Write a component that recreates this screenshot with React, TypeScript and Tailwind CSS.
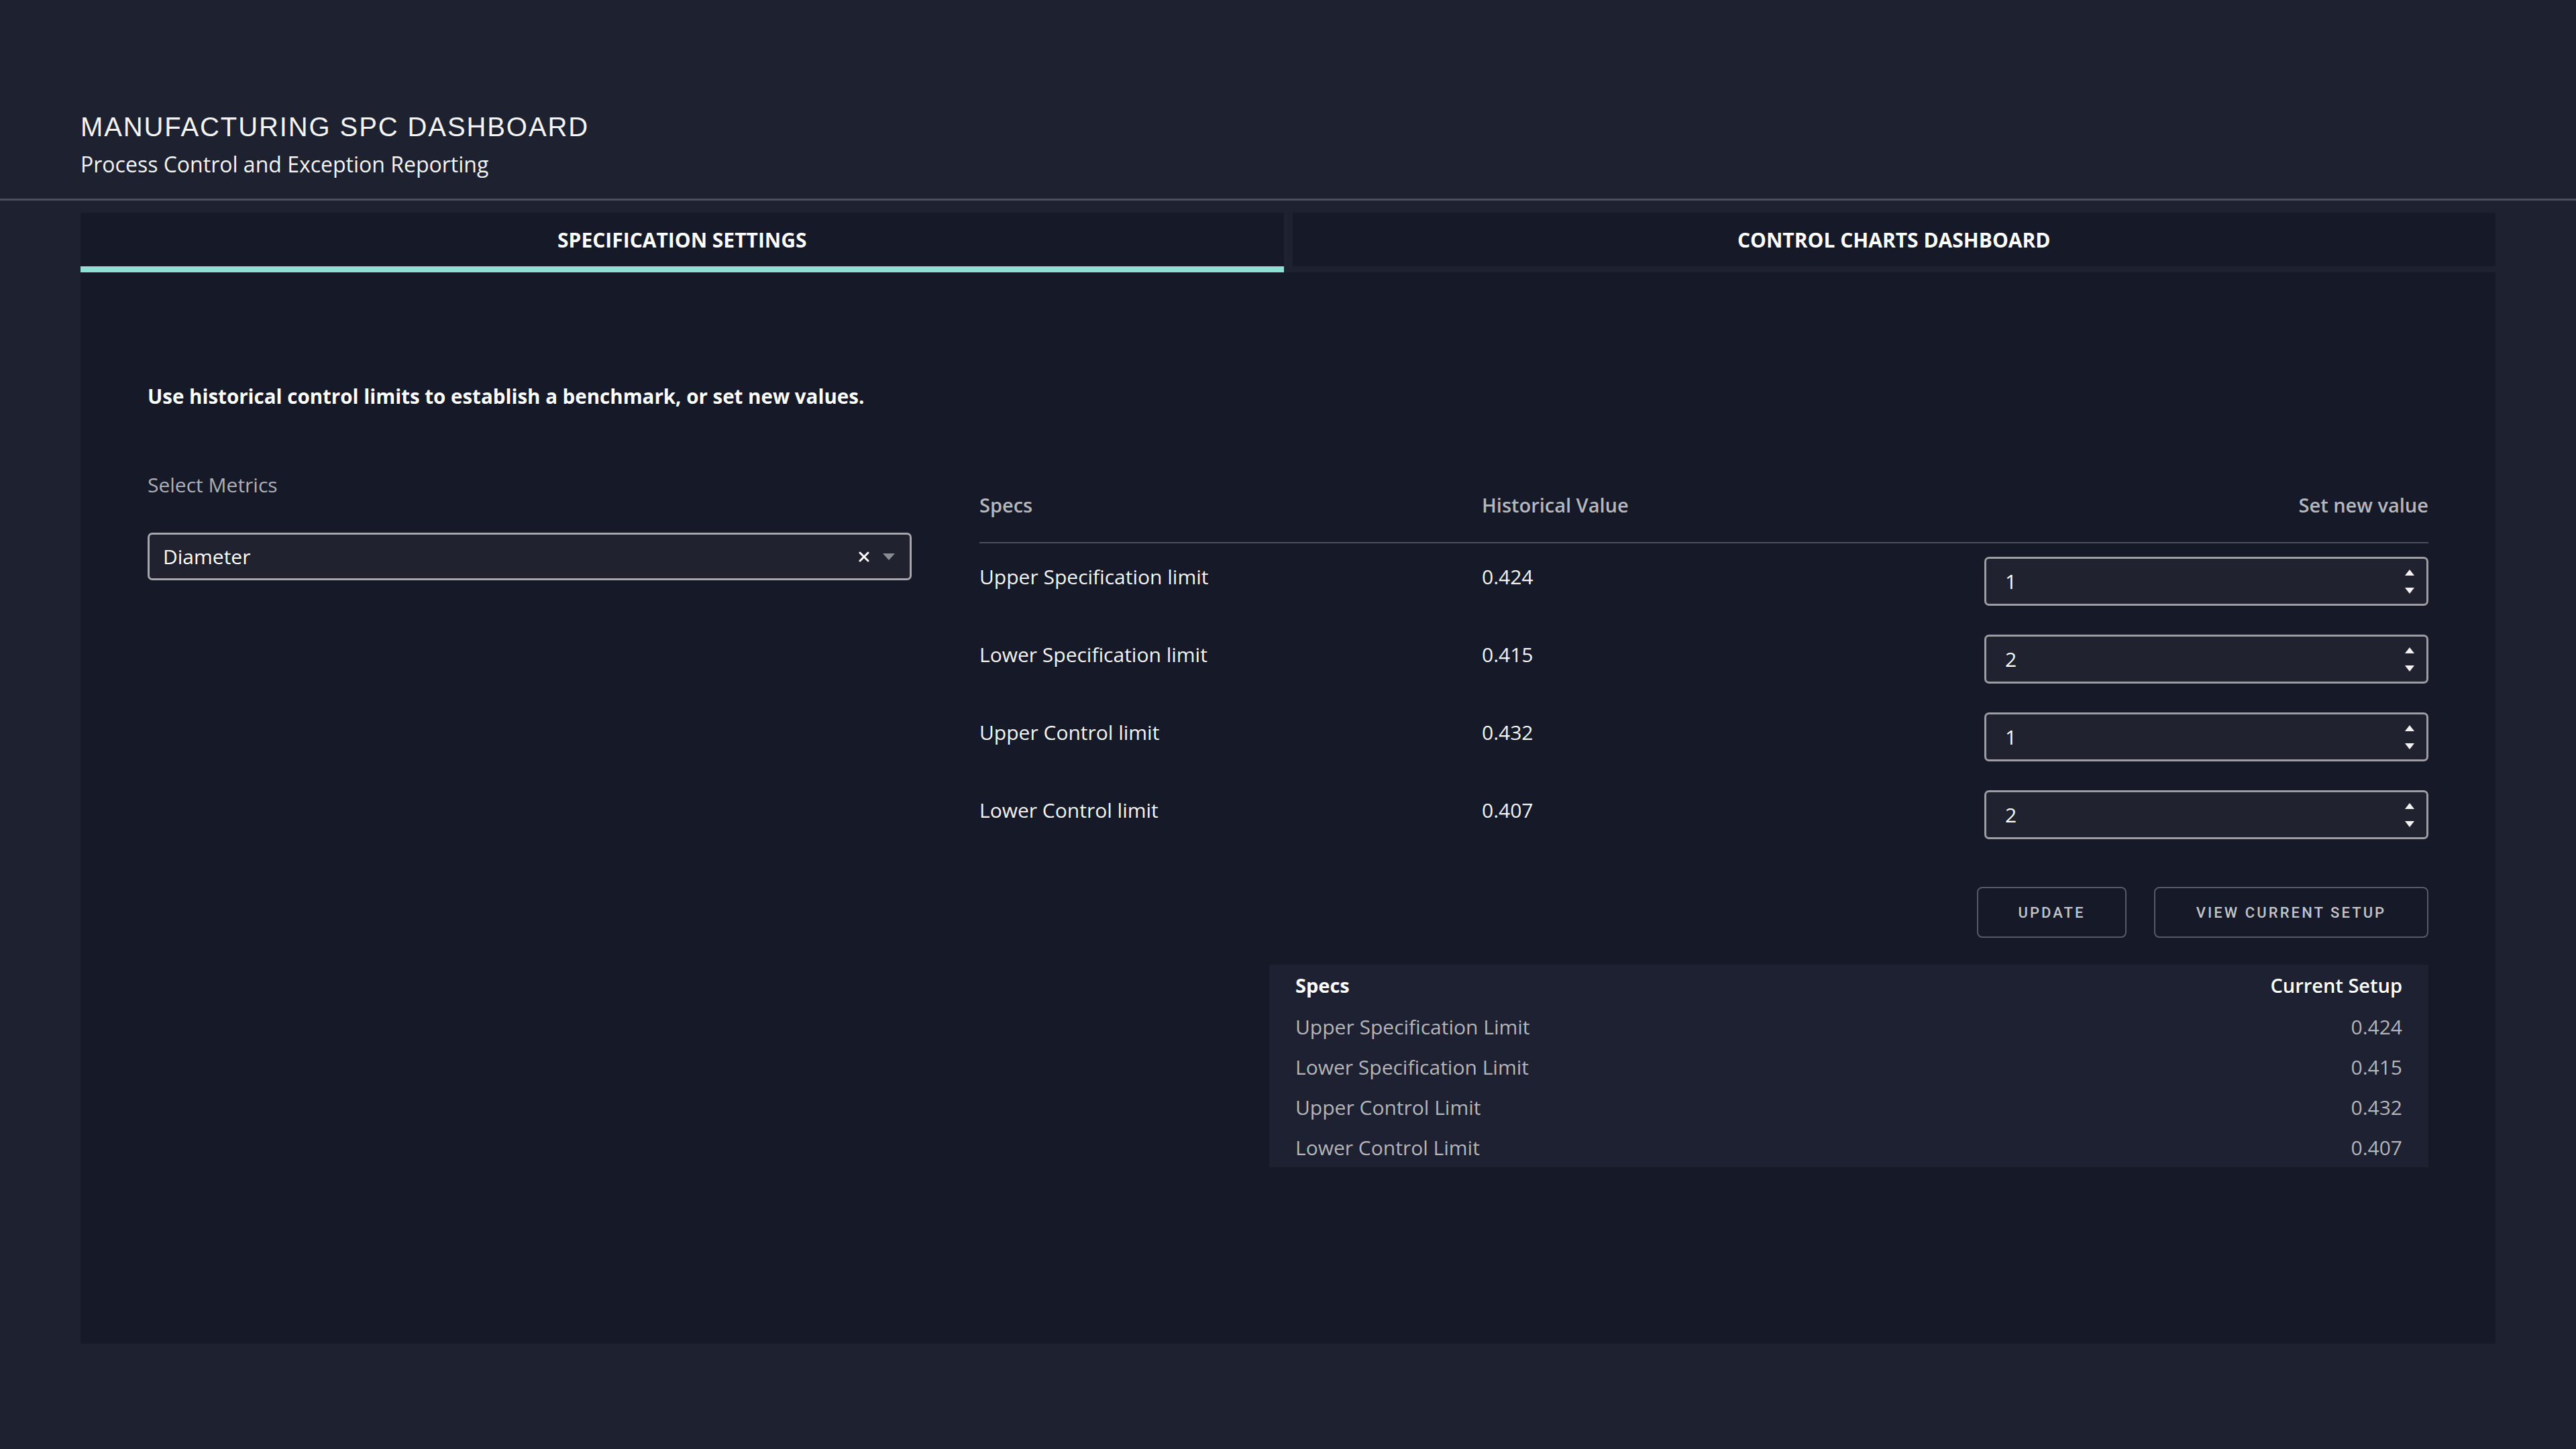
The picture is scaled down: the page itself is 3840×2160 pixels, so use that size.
import React from "react";

const limits = [
  { label: "Upper Specification limit", name: "Upper Specification Limit", hist: "0.424", value: "1" },
  { label: "Lower Specification limit", name: "Lower Specification Limit", hist: "0.415", value: "2" },
  { label: "Upper Control limit", name: "Upper Control Limit", hist: "0.432", value: "1" },
  { label: "Lower Control limit", name: "Lower Control Limit", hist: "0.407", value: "2" },
];

function Spinner() {
  return (
    <div className="flex flex-col items-center justify-between h-[36px]">
      <svg width="14" height="9" viewBox="0 0 14 9">
        <path d="M7 0 L14 9 L0 9 Z" fill="#f2f2f2" />
      </svg>
      <svg width="14" height="9" viewBox="0 0 14 9">
        <path d="M0 0 L14 0 L7 9 Z" fill="#f2f2f2" />
      </svg>
    </div>
  );
}

function NumberInput({ value }: { value: string }) {
  return (
    <div className="h-[73px] w-[662px] flex items-center justify-between pl-[28px] pr-[18px] rounded-[7px] border-[3px] border-[#9c9ea4] bg-[#20232f] text-[30px] text-white">
      <span>{value}</span>
      <Spinner />
    </div>
  );
}

export default function App() {
  return (
    <div className="min-h-screen w-full bg-[#1e2130] text-white font-['Open_Sans',sans-serif] pb-[157px]">
      {/* Banner */}
      <header className="pt-[165px] pb-[30px] px-[120px] border-b-[3px] border-[#4b4f5c]">
        <h1 className="font-['Liberation_Sans',Arial,sans-serif] text-[40px] leading-[48px] tracking-[1.9px] text-[#f4f4f4]">
          MANUFACTURING SPC DASHBOARD
        </h1>
        <p className="mt-[11px] text-[32px] leading-[42px] text-[#f4f4f4]">
          Process Control and Exception Reporting
        </p>
      </header>

      {/* Tabs */}
      <div className="mx-[120px] mt-[18px]">
        <div className="flex gap-[13px]">
          <div className="flex-1 h-[89px] flex items-center justify-center bg-[#161a28] border-b-[9px] border-[#91dfd2] text-[30px] font-bold text-white">
            SPECIFICATION SETTINGS
          </div>
          <div className="flex-1 h-[89px] flex items-center justify-center bg-[#161a28] border-b-[9px] border-[#1e2130] text-[30px] font-bold text-white">
            CONTROL CHARTS DASHBOARD
          </div>
        </div>

        {/* Panel */}
        <div className="h-[1597px] bg-[#161a28] px-[100px] pt-[165px]">
          <p className="text-[29.5px] leading-[40px] font-bold text-white">
            Use historical control limits to establish a benchmark, or set new values.
          </p>

          <div className="mt-[92px] flex gap-[101px]">
            {/* Left: metric select */}
            <div className="w-[1139px] shrink-0">
              <div className="text-[30px] leading-[40px] text-[#aeb0b6]">Select Metrics</div>
              <div className="mt-[51px] h-[71px] flex items-center justify-between pl-[20px] pr-[22px] rounded-[7px] border-[3px] border-[#a5a7ad] bg-[#20232f]">
                <span className="text-[30px] text-white">Diameter</span>
                <div className="flex items-center gap-[20px]">
                  <svg width="16" height="16" viewBox="0 0 16 16">
                    <path d="M2 2 L14 14 M14 2 L2 14" stroke="#ffffff" strokeWidth="3" strokeLinecap="round" />
                  </svg>
                  <svg width="18" height="10" viewBox="0 0 18 10">
                    <path d="M0 0 L18 0 L9 10 Z" fill="#8a8c92" />
                  </svg>
                </div>
              </div>
            </div>

            {/* Right: spec table */}
            <div className="flex-1 pt-[30px]">
              <div className="grid grid-cols-[749px_1fr_662px] pb-[35px] border-b-2 border-[#4b4f5c] text-[29px] leading-[40px] font-semibold text-[#b5b7bd]">
                <span>Specs</span>
                <span>Historical Value</span>
                <span className="text-right">Set new value</span>
              </div>

              <div className="mt-[20px] flex flex-col gap-[43px]">
                {limits.map((row) => (
                  <div key={row.label} className="grid grid-cols-[749px_1fr_662px] items-start text-[30px] leading-[40px] text-[#f4f4f4]">
                    <span className="mt-[10px]">{row.label}</span>
                    <span className="mt-[10px]">{row.hist}</span>
                    <NumberInput value={row.value} />
                  </div>
                ))}
              </div>

              <div className="mt-[71px] flex justify-end gap-[41px] font-['Roboto',sans-serif] text-[22px] font-medium tracking-[0.14em] text-[#c3c5ca]">
                <button className="h-[76px] w-[223px] rounded-[8px] border-2 border-[#565a66] bg-transparent">
                  UPDATE
                </button>
                <button className="h-[76px] w-[409px] rounded-[8px] border-2 border-[#565a66] bg-transparent">
                  VIEW CURRENT SETUP
                </button>
              </div>

              <div className="mt-[40px] ml-auto w-[80%] bg-[#1e2131] px-[39px] text-[30px]">
                <div className="h-[62px] flex items-center justify-between font-bold text-white text-[29px]">
                  <span>Specs</span>
                  <span className="font-semibold">Current Setup</span>
                </div>
                {limits.map((row) => (
                  <div key={row.name} className="h-[60px] flex items-center justify-between text-[#b3b5ba]">
                    <span>{row.name}</span>
                    <span>{row.hist}</span>
                  </div>
                ))}
              </div>
            </div>
          </div>
        </div>
      </div>
    </div>
  );
}
